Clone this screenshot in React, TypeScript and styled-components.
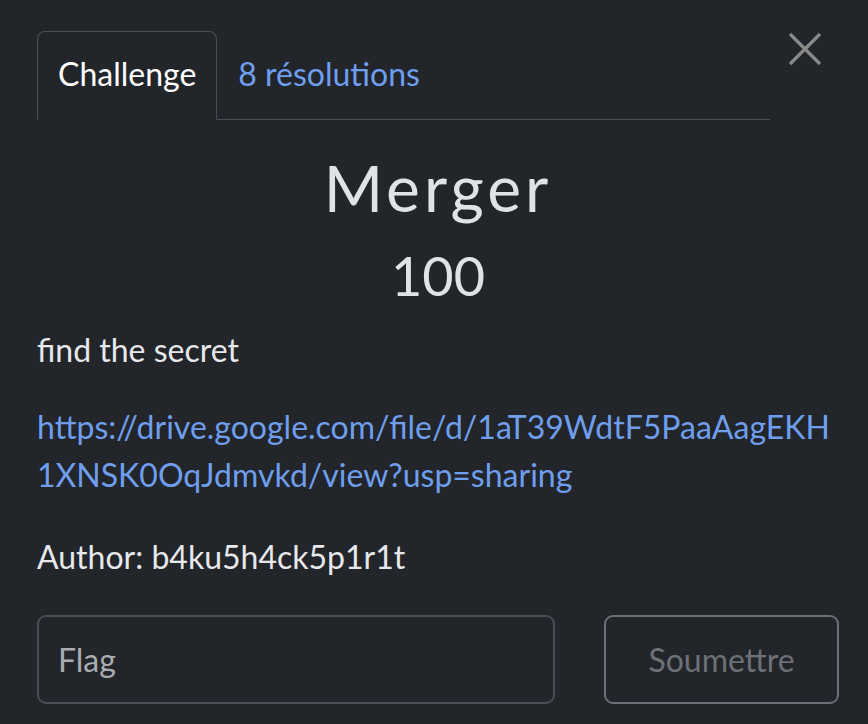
import React from "react";
import styled, { createGlobalStyle } from "styled-components";

const Global = createGlobalStyle`
  html, body {
    margin: 0;
    padding: 0;
    background: #222529;
  }
  body {
    font-family: Lato, "Open Sans", sans-serif;
    color: #e6e8eb;
  }
  * { box-sizing: border-box; }
`;

const Modal = styled.div`
  width: 868px;
  min-height: 724px;
  background: #222529;
  padding: 31px 29px 0 37px;
  display: flex;
  flex-direction: column;
`;

const Header = styled.div`
  display: flex;
  align-items: flex-start;
`;

const Tabs = styled.nav`
  flex: 1;
  display: flex;
  border-bottom: 1px solid #4a4e55;
  height: 89px;
`;

const Tab = styled.a<{ $active?: boolean }>`
  display: block;
  padding: 19px 20px 0 20px;
  height: 89px;
  font-size: 32px;
  line-height: 45px;
  text-decoration: none;
  border: 1px solid ${(p) => (p.$active ? "#4a4e55" : "transparent")};
  border-bottom: ${(p) => (p.$active ? "1px solid #222529" : "none")};
  border-radius: 8px 8px 0 0;
  color: ${(p) => (p.$active ? "#ffffff" : "#6f9eee")};
  background: ${(p) => (p.$active ? "#222529" : "transparent")};
  margin-bottom: ${(p) => (p.$active ? "-1px" : "0")};
  cursor: pointer;
`;

const Close = styled.button`
  width: 69px;
  height: 40px;
  background: none;
  border: none;
  padding: 0;
  display: flex;
  justify-content: center;
  align-items: flex-start;
  cursor: pointer;
`;

const Title = styled.h2`
  margin: 30px 0 0;
  text-align: center;
  font-size: 64px;
  line-height: 1.2;
  font-weight: 400;
  letter-spacing: 4px;
  color: #dfe2e6;
`;

const Value = styled.h3`
  margin: 17px 0 0;
  text-align: center;
  font-size: 54px;
  line-height: 1.2;
  font-weight: 400;
  color: #dfe2e6;
`;

const Para = styled.p<{ $gap: number }>`
  margin: ${(p) => p.$gap}px 0 0;
  font-size: 32px;
  line-height: 48px;
  color: #e6e8eb;
  word-break: break-all;
`;

const Link = styled.a`
  color: #6f9eee;
  text-decoration: none;
`;

const FormRow = styled.form`
  margin-top: 34px;
  display: grid;
  grid-template-columns: 518px 235px;
  column-gap: 49px;
`;

const FlagInput = styled.input`
  height: 89px;
  border: 2px solid #4a4e55;
  border-radius: 9px;
  background: #222529;
  padding: 0 19px;
  font-family: Lato, sans-serif;
  font-size: 32px;
  color: #e6e8eb;
  outline: none;
  &::placeholder {
    color: #a9adb2;
  }
`;

const Submit = styled.button`
  height: 89px;
  border: 2px solid #6b7076;
  border-radius: 9px;
  background: transparent;
  font-family: Lato, sans-serif;
  font-size: 32px;
  color: #6c7177;
  cursor: pointer;
`;

export default function App() {
  return (
    <>
      <Global />
      <Modal>
        <Header>
          <Tabs>
            <Tab $active>Challenge</Tab>
            <Tab>8 résolutions</Tab>
          </Tabs>
          <Close aria-label="Close">
            <svg width="34" height="34" viewBox="0 0 34 34" style={{ marginTop: 1 }}>
              <path d="M2 2 L32 32 M32 2 L2 32" stroke="#8a8a8a" strokeWidth="3.2" />
            </svg>
          </Close>
        </Header>
        <Title>Merger</Title>
        <Value>100</Value>
        <Para $gap={17}>find the secret</Para>
        <Para $gap={29}>
          <Link href="#">
            https://drive.google.com/file/d/1aT39WdtF5PaaAagEKH1XNSK0OqJdmvkd/view?usp=sharing
          </Link>
        </Para>
        <Para $gap={34}>Author: b4ku5h4ck5p1r1t</Para>
        <FormRow onSubmit={(e) => e.preventDefault()}>
          <FlagInput placeholder="Flag" />
          <Submit type="submit">Soumettre</Submit>
        </FormRow>
      </Modal>
    </>
  );
}
